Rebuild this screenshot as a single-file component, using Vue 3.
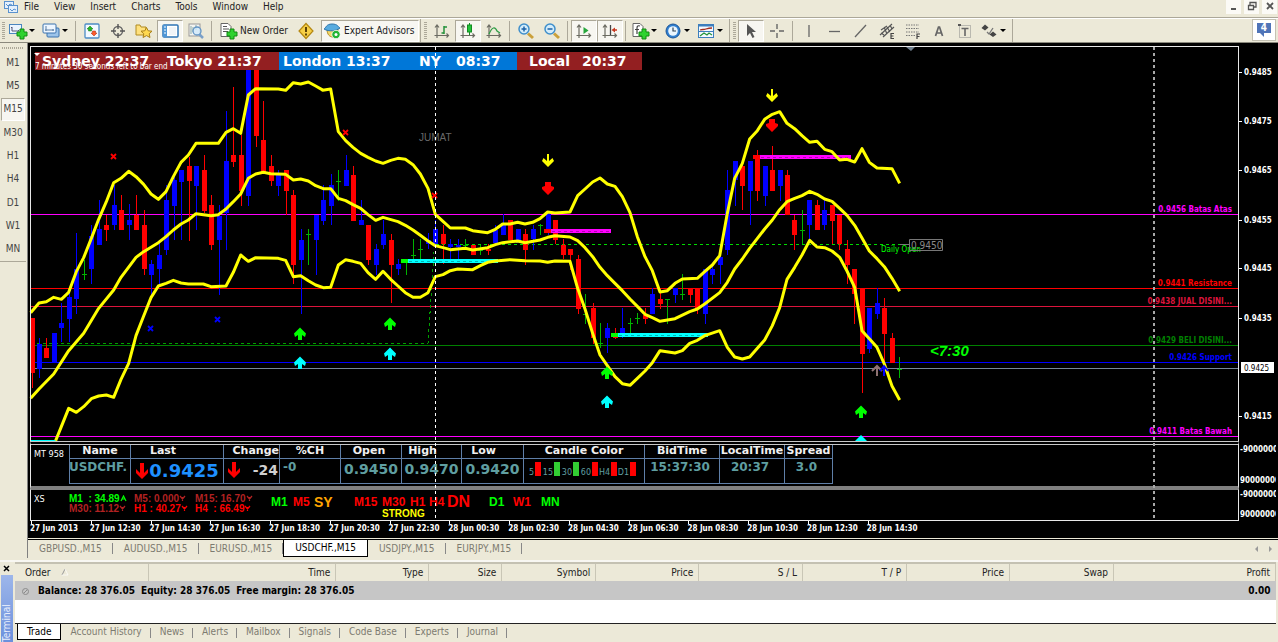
<script setup>
const menus = ['File', 'View', 'Insert', 'Charts', 'Tools', 'Window', 'Help']

const axes = '<path d="M5 3v13M2.5 13.500h14M3 5.500l2-2.500 2 2.500M14.500 11.500l2 2-2 2" fill="none" stroke="#6b6b62" stroke-width="1.200"/>'
const plus = '<path d="M12 7h4v3h3v4h-3v3h-4v-3h-3v-4h3z" fill="#2fd22f" stroke="#128a12"/>'
const lens = '<path d="M12 11.500l5 4.500" stroke="#caa03a" stroke-width="3"/><circle cx="8" cy="7" r="5" fill="#d3ecfa" stroke="#3f8fcb" stroke-width="1.500"/>'

const icons = {
  newChart: '<rect x="1.500" y="2.500" width="12" height="9" fill="#eaf4ff" stroke="#4a86c0"/><path d="M4 5v4h7M4 5l-1 1M11 9l-1-1" stroke="#557" fill="none"/>' + plus,
  profiles: '<rect x="6" y="6" width="12" height="9" rx="1" fill="#9cc4ea" stroke="#3a72ae"/><rect x="2" y="2" width="13" height="9" rx="1" fill="#edf6ff" stroke="#3a72ae"/><path d="M5 4v5M4 8h9M12 7v2" stroke="#5a7ea4"/>',
  market: '<rect x="3" y="2" width="14" height="14" rx="1" fill="#f3f9ff" stroke="#4d8cc5" stroke-width="1.300"/><path d="M8 4l3 3H9.500v2h-3V7H5z" fill="#25b825" stroke="#137313" stroke-width=".5"/><path d="M12 14l-3-3h1.500V9h3v2H15z" fill="#ff5a2b" stroke="#a33010" stroke-width=".5"/>',
  cross: '<circle cx="10" cy="9" r="4.500" fill="none" stroke="#666" stroke-width="1.400"/><path d="M10 2v5M10 11v5M3 9h5M12 9h5" stroke="#555" stroke-width="1.400"/>',
  star: '<path d="M2 3h4l1 2h5v8H2z" fill="#ffe17d" stroke="#b08b22"/><path d="M12.500 5.500l1.700 3.300 3.800.4-2.800 2.600.8 3.700-3.500-1.900-3.500 1.900.8-3.700L7 9.200l3.800-.4z" fill="#ffd94f" stroke="#a98018"/>',
  navigator: '<rect x="3" y="3" width="15" height="12" rx="1" fill="#fff" stroke="#2f74b5" stroke-width="1.500"/><path d="M3 3h4v12H3z" fill="#4f96d6"/><path d="M9 6h7M9 8h7M9 10h7M9 12h7" stroke="#e3e8ef"/><path d="M4 5h2M4 8h2M4 11h2" stroke="#fff"/>',
  tester: '<rect x="3" y="2" width="11" height="12" fill="#f4f4f0" stroke="#999"/><path d="M5 4v8M7 5v5M10 3v5" stroke="#8aa"/><path d="M13 12l4 4" stroke="#7aa0c8" stroke-width="2.500"/><circle cx="11" cy="9" r="4" fill="#cfe8fb" fill-opacity=".8" stroke="#6294c4" stroke-width="1.300"/>',
  order: '<path d="M3 1.500h7l3 3v10H3z" fill="#fff" stroke="#666"/><path d="M5 4.500h4M5 7h6M5 9.500h5" stroke="#555"/>' + plus,
  diamond: '<path d="M10 1.500l7 7.500-7 7.500L3 9z" fill="#f7cf46" stroke="#b48710" stroke-width="1.200"/><path d="M10 5v5M10 11.500v2" stroke="#4a3300" stroke-width="1.800"/>',
  expert: '<path d="M5 7c0 6 3 8 6 8 4 0 5-3 5-8z" fill="#f3d76a" stroke="#b38d25"/><path d="M2 7c2-1 2-5 8-5s6 3 8 4c-4 3-11 4-16 1z" fill="#58abdf" stroke="#2b74ab"/><circle cx="14" cy="12.500" r="4.200" fill="#22b534" stroke="#fff" stroke-width=".8"/><circle cx="14" cy="12.500" r="1.500" fill="#fff"/>',
  bars: axes + '<path d="M12 4v8M12 5h3M9.500 11H12" stroke="#23913a" stroke-width="1.500" fill="none"/>',
  candles: axes + '<path d="M11.500 1v12" stroke="#128a22"/><rect x="9.500" y="3" width="4" height="7" fill="#22c33a" stroke="#128a22"/>',
  line: axes + '<path d="M5 12c3-7 6-8 8-3l3 2" fill="none" stroke="#2f9d45" stroke-width="1.300"/>',
  zoomIn: lens + '<path d="M5.500 7h5M8 4.500v5" stroke="#1b62a8" stroke-width="1.500"/>',
  zoomOut: lens + '<path d="M5.500 7h5" stroke="#1b62a8" stroke-width="1.500"/>',
  scroll: axes + '<path d="M9.500 5l5 3.500-5 3.500z" fill="#26a63c"/>',
  shift: axes + '<path d="M10.500 3v10" stroke="#444" stroke-width="1.300"/><path d="M11.500 8l3.500-2.500v5z" fill="#c8371e"/><path d="M14 8h3" stroke="#c8371e" stroke-width="1.500"/>',
  indicators: '<path d="M3 1.500h7l3 3v10H3z" fill="#fff" stroke="#666"/><path d="M10 4c-3-1-3 1-3 3v5M5 7.500h4" fill="none" stroke="#444" stroke-width="1.200"/>' + plus,
  clock: '<circle cx="10" cy="9" r="7" fill="#2f7fd0" stroke="#1d5698"/><circle cx="10" cy="9" r="4.800" fill="#eaf6ff"/><path d="M10 5.500V9h3" stroke="#345" stroke-width="1.200" fill="none"/>',
  template: '<rect x="2.500" y="2.500" width="15" height="13" fill="#f4faff" stroke="#3d7fbd"/><path d="M2.500 3.500h15" stroke="#3d7fbd" stroke-width="2"/><path d="M4 8c3-1 3 0 6-1s3-1 6-1" stroke="#a52d1e" fill="none" stroke-width="1.300"/><path d="M3 9.500h14" stroke="#3d7fbd"/><path d="M4 14l4-3 3 2 2-2 3 2" stroke="#25953a" fill="none" stroke-width="1.300"/>',
  pointer: '<path d="M6 2v12l3-3 2.500 5 2-1-2.500-5h4z" fill="#555"/>',
  crosshair: '<path d="M10 2v5M10 11v5M3 9h5M12 9h5" stroke="#666" stroke-width="1.400"/>',
  vertical: '<path d="M10 3v12" stroke="#666" stroke-width="1.300"/>',
  horizontal: '<path d="M4 9.500h11" stroke="#666" stroke-width="1.300"/>',
  trend: '<path d="M4 15L15 3" stroke="#666" stroke-width="1.300"/>',
  channel: '<path d="M3 13L15 2M4 8l6-4M6 15L17 5M4 11l3 2M7 5l3 7M10 5l3 5M13 3l2 4" stroke="#555" stroke-width="1.200"/><path d="M17 11.500h-3v5h3M14 14h2.500" fill="none" stroke="#444" stroke-width="1.200"/>',
  fibo: '<path d="M3 3h13M3 6.500h13M3 10h13M3 13.500h9" stroke="#777" stroke-dasharray="1.500 1"/><path d="M17 12h-3v5M14 14.500h2.500" fill="none" stroke="#444" stroke-width="1.200"/>',
  letter: '<path d="M6.500 14l3-9h1l3 9M7.500 11h5" fill="none" stroke="#666" stroke-width="1.700"/>',
  label: '<rect x="4.500" y="3.500" width="11" height="12" fill="none" stroke="#888" stroke-dasharray="1 1"/><path d="M6.500 6.500h7M10 6v8" stroke="#666" stroke-width="1.600"/><path d="M3 2h3v2H3z" fill="#555"/>',
  arrows: '<path d="M6 2.500l3.500 3L6 8.500 2.500 6z" fill="#444"/><path d="M8 10l2 2 4-6" stroke="#777" fill="none" stroke-width="1.300"/><path d="M14 9.500l3.500 3-3.500 2.500-3.500-2.500z" fill="#444"/>',
}

const groups = [
  [
    { i: 'newChart', menu: true }, { i: 'profiles', menu: true }, { sep: true },
    { i: 'market' }, { i: 'cross' }, { i: 'star' }, { i: 'navigator', on: true }, { i: 'tester' }, { sep: true },
    { i: 'order', text: 'New Order' }, { i: 'diamond' }, { i: 'expert', text: 'Expert Advisors', on: true },
  ],
  [
    { i: 'bars' }, { i: 'candles', on: true }, { i: 'line' }, { sep: true }, { i: 'zoomIn' }, { i: 'zoomOut' }, { sep: true },
    { i: 'scroll', on: true }, { i: 'shift', on: true }, { sep: true },
    { i: 'indicators', menu: true }, { i: 'clock', menu: true }, { i: 'template', menu: true },
  ],
  [
    { i: 'pointer', on: true }, { i: 'crosshair' }, { sep: true }, { i: 'vertical' }, { i: 'horizontal' }, { i: 'trend' },
    { i: 'channel' }, { i: 'fibo' }, { i: 'letter' }, { i: 'label' }, { i: 'arrows', menu: true },
  ],
]

const frames = ['M1', 'M5', 'M15', 'M30', 'H1', 'H4', 'D1', 'W1', 'MN']

// Bars from left to right: colour, high, body top, body bottom, low (thirds of a pixel below the plot origin)
const bars = `r 744 744 910 955|b 803 821 896 923|r 803 834 865 865|b 790 790 878 878|b 700 758 774 815|b 670 682 746 816|b 490 597 688 733|g 570 613 613 630
b 465 497 598 642|b 390 478 525 525|r 434 465 480 512|b 345 405 466 480|r 374 419 480 480|b 403 450 466 511|r 374 434 480 480|r 419 464 598 615
b 570 582 615 680|b 510 555 598 650|b 345 390 540 555|b 310 330 407 511|b 300 300 335 511|r 262 287 334 513|b 287 287 348 480|r 256 300 423 430
r 374 404 525 540|b 405 437 511 675|b 124 273 430 540|r 51 255 276 290|r 195 255 363 407|b -3 -3 377 407|r -3 -3 199 230|r 93 210 305 305
r 255 288 334 348|b 300 315 348 377|r 300 300 363 434|r 360 374 585 643|b 478 509 570 733|g 478 493 493 585|b 434 434 511 615|b 345 390 453 466
b 313 345 407 466|g 300 333 333 392|b 255 300 348 348|r 287 315 453 453|b 390 450 466 466|r 464 464 570 585|b 522 537 585 615|b 450 492 525 537
r 492 509 585 700|b 568 582 598 615|g 570 573 573 615|g 508 555 555 570|g 508 538 538 570|b 490 510 522 537|b 450 478 522 530|r 464 492 522 582
b 508 522 530 570|b 508 525 530 568|g 508 525 525 530|r 525 525 555 555|g 525 540 540 556|r 522 537 543 556|b 465 480 520 525|b 432 465 495 495
r 450 450 511 511|b 478 478 520 520|r 478 492 540 585|b 465 478 508 540|g 462 465 465 495|b 430 430 480 495|r 450 450 511 522|r 508 525 555 568
r 537 537 555 600|r 555 568 716 733|g 672 733 733 762|r 700 713 805 822|g 760 818 818 835|b 760 773 805 850|r 773 800 805 808|b 713 773 800 805
g 743 760 760 790|g 730 745 745 762|r 713 735 747 762|b 655 672 733 733|r 655 686 701 716|g 686 688 688 762|b 655 655 676 700|g 613 673 673 690
r 657 657 675 700|r 657 657 716 733|b 597 597 733 762|b 585 597 615 643|b 555 560 585 643|b 300 360 540 555|b 273 273 330 407|r 273 287 348 420
b 273 273 363 466|r 240 262 363 392|b 287 287 377 407|r 228 300 363 363|b 300 300 348 392|r 300 315 436 436|r 434 450 495 540|g 419 480 480 522
b 390 390 466 510|r 390 404 480 480|b 390 419 466 480|r 404 404 453 522|r 434 434 522 540|r 509 537 585 643|r 597 597 673 762|r 657 657 852 968
b 713 713 836 850|b 655 700 732 748|r 685 713 792 880|r 790 804 880 880|g 862 896 896 923`
  .split(/[|\n]/)
  .map((row, n) => {
    const [c, ...v] = row.trim().split(' ')
    const [high, top, bottom, low] = v.map((y) => Math.round(70 + y / 3))
    return { c, high, top, bottom, low, x: Math.round(31.5 + 7.48 * n) }
  })

// Each run of points starts at its own horizontal origin
const join = (a, b, c) =>
  [[a, 0], [b, 960], [c, 1920]]
    .flatMap(([s, dx]) => s.split(' ').map((p) => { const [x, y] = p.split(','); return `${+x + dx},${+y + 210}` }))
    .join(' ')

const bands = [
  join(
    '92,728 117,699 139,695 161,682 184,688 206,667 229,605 251,563 274,505 296,448 319,395 341,338 363,325 386,304 408,320 431,343 453,372 475,388 498,365 520,320 543,277 565,255 588,220 655,220 678,187 700,176 722,190 745,75 767,56 835,57 857,61 880,38 902,42 925,36 947,48 970,61',
    '8,61 32,57 55,185 77,212 99,232 122,250 144,262 167,273 189,280 212,271 234,265 256,268 279,284 301,312 324,355 346,433 369,454 391,474 436,474 458,482 503,488 526,478 548,462 570,462 593,457 615,462 638,457 660,446 683,426 705,429 750,426 773,377 795,357 818,336 840,324 862,342 885,349 907,380 930,428 952,500',
    '15,560 37,602 60,666 82,662 105,640 127,627 172,625 194,605 217,585 239,557 262,430 284,325 307,280 329,207 352,182 374,148 397,133 419,125 441,160 464,176 486,197 509,217 531,214 554,238 576,245 599,270 621,268 644,276 666,236 688,277 711,294 756,296 779,340',
  ),
  join(
    '92,985 117,957 161,912 206,842 251,790 296,715 341,660 363,622 408,562 431,545 475,518 498,500 520,480 543,462 565,450 588,431 633,437 655,434 678,417 700,395 722,372 745,325 767,312 790,307 812,311 857,313 880,330 902,327 925,333 947,347 970,356',
    '32,356 55,385 77,392 99,404 122,415 144,434 167,451 189,442 234,455 256,466 279,480 301,496 324,513 346,527 369,533 391,539 436,535 458,540 503,533 526,524 548,518 593,513 615,518 660,510 683,502 705,497 750,501 773,512 795,533 818,560 840,592 862,617 885,640 907,662 930,687 952,709',
    '15,733 37,743 60,754 105,746 149,725 172,717 194,702 239,668 262,637 284,597 307,567 329,535 374,477 397,450 419,419 441,395 464,385 486,377 509,364 531,373 554,387 576,394 599,415 621,436 644,466 666,504 688,543 711,566 733,590 756,625 779,664',
  ),
  join(
    '167,1112 184,1070 206,1015 229,1027 251,1010 274,986 296,978 319,975 341,982 363,928 386,880 408,797 431,738 453,683 475,648 498,640 520,631 543,639 565,642 610,642 633,650 678,648 700,607 722,555 745,574 767,563 835,565 857,571 880,620 902,617 925,632 947,645 970,653',
    '32,652 55,585 77,569 99,574 122,580 144,608 167,628 189,604 212,628 234,648 256,668 279,682 301,682 324,668 346,620 369,614 391,602 413,597 458,599 481,587 503,577 526,573 570,569 615,572 660,573 683,577 705,573 750,574 773,655 795,717 818,790 840,855 862,887 885,920 907,941 930,946 952,925',
    '15,903 37,878 60,842 105,849 127,842 149,820 172,811 194,797 239,782 262,832 284,861 307,867 329,861 352,835 374,810 397,767 419,713 441,628 464,592 486,555 509,511 531,531 554,533 576,543 599,562 621,603 644,652 666,782 688,806 711,832 733,882 756,948 779,990',
  ),
]

const levels = [
  { y: 214, c: '#ff00ff', t: '0.9456 Batas Atas' },
  { y: 288, c: '#ff0000', t: '0.9441 Resistance' },
  { y: 306, c: '#dc143c', t: '0.9438 JUAL DISINI...' },
  { y: 345, c: '#008000', t: '0.9429 BELI DISINI...' },
  { y: 362, c: '#0000ff', t: '0.9426 Support' },
  { y: 368, c: '#778899', t: '' },
  { y: 436, c: '#ff00ff', t: '0.9411 Batas Bawah' },
]

const prices = [[72, '0.9485'], [121, '0.9475'], [170, '0.9465'], [220, '0.9455'], [268, '0.9445'], [318, '0.9435'], [416, '0.9415']]

const zones = [
  { x: 401, w: 97, y: 259, c: '#00ffff', s: '#00ff00' },
  { x: 611, w: 97, y: 333, c: '#00ffff', s: '#00ff00' },
  { x: 544, w: 67, y: 229, c: '#ff00ff', s: '#ff0000' },
  { x: 753, w: 98, y: 155, c: '#ff00ff', s: '#ff0000' },
]

const up = 'M0-6.500L6-.500L5 3L2 1V6H-2V1L-5 3L-6-.500z'
const down = 'M-1-6H1V1L4.500-2L6 1L0 7L-6 1L-4.500-2L-1 1z'
const fat = 'M-3-6H3V-2L6-1V1L0 7L-6 1V-1L-3-2z'
const marks = [
  ...[[300, 334], [390, 324], [607, 373], [861, 412]].map(([x, y]) => ({ x, y, d: up, c: '#00ff00' })),
  ...[[300, 363], [390, 354], [607, 402]].map(([x, y]) => ({ x, y, d: up, c: '#00ffff' })),
  ...[[548, 160], [772, 95]].map(([x, y]) => ({ x, y, d: down, c: '#ffff00' })),
  ...[[548, 188], [772, 125]].map(([x, y]) => ({ x, y, d: fat, c: '#ff0000' })),
]
const crosses = [[114, 156, '#f00'], [346, 132, '#f00'], [435, 195, '#f00'], [151, 328, '#00f'], [218, 319, '#00f']]

const quote = [
  { h: 'Name', w: 61, v: 'USDCHF.', k: 'm' },
  { h: 'Last', w: 93, v: '0.9425', k: 'last', arrow: true },
  { h: 'Change', w: 56, v: '-24', k: 'change', arrow: true },
  { h: '%CH', w: 61, v: '-0', k: 'left' },
  { h: 'Open', w: 61, v: '0.9450', k: 'big' },
  { h: 'High', w: 60, v: '0.9470', k: 'big high' },
  { h: 'Low', w: 62, v: '0.9420', k: 'big high' },
  { h: 'Candle Color', w: 121, k: 'candle' },
  { h: 'BidTime', w: 75, v: '15:37:30', k: 'm' },
  { h: 'LocalTime', w: 65, v: '20:37', k: 'm' },
  { h: 'Spread', w: 48, v: '3.0', k: 'm' },
]
const candleColors = [['5', 'red'], ['15', 'green'], ['30', 'green'], ['60', 'red'], ['H4', 'red'], ['D1', 'red']]

const strengths = [
  ['M1  : 34.89', 'lime', 1], ['M5: 0.000', 'brown', 0], ['M15: 16.70', 'brown', 0],
  ['M30: 11.12', 'brown', 0], ['H1 : 40.27', 'scarlet', 0], ['H4  : 66.49', 'scarlet', 0],
]
const signals = [
  ['M1', 'lime'], ['M5', 'scarlet'], ['SY', 'gold'], ['M15', 'scarlet'], ['M30', 'scarlet'], ['H1', 'scarlet'],
  ['H4', 'scarlet'], ['DN', 'dn'], ['D1', 'lime'], ['W1', 'scarlet'], ['MN', 'lime'],
]

const times = ['27 Jun 2013', '27 Jun 12:30', '27 Jun 14:30', '27 Jun 16:30', '27 Jun 18:30', '27 Jun 20:30', '27 Jun 22:30',
  '28 Jun 00:30', '28 Jun 02:30', '28 Jun 04:30', '28 Jun 06:30', '28 Jun 08:30', '28 Jun 10:30', '28 Jun 12:30', '28 Jun 14:30']

const charts = ['GBPUSD.,M15', 'AUDUSD.,M15', 'EURUSD.,M15', 'USDCHF.,M15', 'USDJPY.,M15', 'EURJPY.,M15']
const columns = [['Order', 134], ['Time', 187], ['Type', 93], ['Size', 73], ['Symbol', 94], ['Price', 103], ['S / L', 104],
  ['T / P', 104], ['Price', 103], ['Swap', 104], ['Profit', 162]]
const tabs = ['Trade', 'Account History', 'News', 'Alerts', 'Mailbox', 'Signals', 'Code Base', 'Experts', 'Journal']
</script>

<template>
  <div class="app">
    <nav class="menubar">
      <svg class="logo" width="14" height="14" viewBox="0 0 14 14">
        <rect x=".5" y="1.500" width="9" height="7" fill="#e4f0fc" stroke="#5a92ce" />
        <rect x="4.500" y="5.500" width="9" height="7" fill="#e4f0fc" stroke="#5a92ce" />
        <path d="M2 4l2 2 2-2 2 1M6 9l2 2 2-2 2 1" fill="none" stroke="#5a92ce" />
      </svg>
      <button v-for="m in menus" :key="m" type="button">{{ m }}</button>
      <span class="win">
        <button type="button" aria-label="Minimize"><svg width="10" height="10"><path d="M2 8h5" stroke="#555" stroke-width="2" /></svg></button>
        <button type="button" aria-label="Restore"><svg width="10" height="10"><path d="M3 4V1.500h6v4.500H7M3 1.500h6M1.500 4.500h5v4h-5z" fill="none" stroke="#555" stroke-width="1.300" /></svg></button>
        <button type="button" aria-label="Close"><svg width="10" height="10"><path d="M2 2l6 6M8 2l-6 6" stroke="#555" stroke-width="1.800" /></svg></button>
      </span>
    </nav>

    <div class="toolbar">
      <div v-for="(g, n) in groups" :key="n" class="group">
        <span class="grip"></span>
        <template v-for="(b, k) in g" :key="k">
          <span v-if="b.sep" class="sep"></span>
          <button v-else type="button" :class="{ on: b.on, drop: b.menu, text: b.text }" :aria-label="b.text || b.i">
            <svg width="20" height="18" viewBox="0 0 20 18" v-html="icons[b.i]"></svg>
            <span v-if="b.text">{{ b.text }}</span>
            <i v-if="b.menu" class="caret"></i>
          </button>
        </template>
      </div>
      <button type="button" class="news" aria-label="News">
        <svg width="18" height="16" viewBox="0 0 18 16"><path d="M2 1h14v10H9v4l-4-4H2z" fill="#4f74b8" /></svg>
        <span>4</span>
      </button>
    </div>

    <div class="work">
      <aside class="side">
        <div class="frames">
          <button v-for="f in frames" :key="f" type="button" :class="{ on: f === 'M15' }">{{ f }}</button>
        </div>
      </aside>

      <main class="window">
        <div class="chart">
          <svg class="plot" viewBox="28 43 1250 398">
            <rect x="28" y="43" width="1250" height="398" fill="#000" />
            <g shape-rendering="crispEdges">
              <rect v-for="l in levels" :key="l.y" x="31" :y="l.y" width="1207" height="1" :fill="l.c" />
              <path d="M31 343H428L434 252" class="open" />
              <path d="M436 244.500H905" class="open bright" />
              <g v-for="(b, n) in bars" :key="n" :class="b.c">
                <rect :x="b.x" :y="b.high" width="1" :height="b.low - b.high" />
                <rect :x="b.x - 2" :y="b.top" width="5" :height="Math.max(1, b.bottom - b.top)" />
              </g>
              <g v-for="z in zones" :key="z.x">
                <rect :x="z.x" :y="z.y" :width="z.w" height="4" :fill="z.c" />
                <rect :x="z.x" :y="z.y" width="7" height="4" :fill="z.s" />
                <path :d="`M${z.x + 8} ${z.y + 2}H${z.x + z.w}`" stroke="#000" stroke-opacity=".3" stroke-dasharray="3 3" />
              </g>
              <rect x="31" y="440" width="25" height="1" fill="#0ff" />
            </g>
            <g transform="scale(0.333333)">
              <polyline v-for="(p, n) in bands" :key="n" :points="p" class="band" />
            </g>
            <path v-for="(m, n) in marks" :key="n" :d="m.d" :fill="m.c" :transform="`translate(${m.x} ${m.y})`" />
            <path v-for="(c, n) in crosses" :key="n" :d="`M${c[0] - 3} ${c[1] - 2}l5 5m0-5l-5 5`" :stroke="c[2]" stroke-width="1.800" />
            <path d="M861 435l6 6h-12z" fill="#0ff" />
            <path d="M877 376v-10M872 371l5-5 5 5" fill="none" stroke="#8f7272" stroke-width="2" />
            <path d="M884 376v-10M880 371l4-5 4 5" fill="none" stroke="#00f" stroke-width="2" />

            <rect x="35" y="52" width="244" height="18" fill="#931f21" />
            <rect x="279" y="52" width="238" height="18" fill="#0077d8" />
            <rect x="517" y="52" width="125" height="18" fill="#931f21" />
            <g class="clock">
              <text x="42" y="66">Sydney 22:37</text>
              <text x="167" y="66">Tokyo 21:37</text>
              <text x="283" y="66">London 13:37</text>
              <text x="419" y="66">NY</text>
              <text x="456" y="66">08:37</text>
              <text x="529" y="66">Local</text>
              <text x="582" y="66">20:37</text>
            </g>
            <path d="M34 53h6l-3 3z" fill="#fff" />
            <text x="35" y="69" class="s left">7 minutes 30 seconds left to bar end</text>
            <text x="419" y="141" class="day">JUMAT</text>
            <text x="930" y="356" class="timer">&lt;7:30</text>
            <text x="881" y="252" class="s lime">Daily Open</text>
            <path d="M900 244.500h9M909.500 239.500h33v11h-33z" fill="none" stroke="#777" />
            <text x="911" y="249" class="tag">0.9450</text>
            <g class="s end">
              <text v-for="l in levels" :key="l.y" x="1232" :y="l.y - 2" :fill="l.c">{{ l.t }}</text>
            </g>

            <path d="M30.500 441V46.500H1238.500V441" fill="none" stroke="#e8e8e8" shape-rendering="crispEdges" />
            <path d="M906 47h9l-4 4z" fill="#708090" />
            <g class="axis">
              <g v-for="p in prices" :key="p[0]">
                <path :d="`M1239 ${p[0] + .5}h3`" stroke="#fff" />
                <text x="1244" :y="p[0] + 3">{{ p[1] }}</text>
              </g>
              <rect x="1241" y="362" width="33" height="11" fill="#fff" />
              <text x="1244" y="371" class="now">0.9425</text>
            </g>
          </svg>

          <section class="pane quote">
            <span class="code">MT 958</span>
            <table>
              <colgroup><col v-for="q in quote" :key="q.h" :style="{ width: q.w + 'px' }" /></colgroup>
              <thead><tr><th v-for="q in quote" :key="q.h" :class="q.k">{{ q.h }}</th></tr></thead>
              <tbody>
                <tr>
                  <td v-for="q in quote" :key="q.h" :class="q.k">
                    <div>
                      <svg v-if="q.arrow" width="14" height="18" viewBox="0 0 14 18"><path d="M5 1h4v10l4-4v4l-6 6-6-6V7l4 4z" fill="#f00" /></svg>
                      <template v-if="q.v">{{ q.v }}</template>
                      <template v-else>
                        <span v-for="c in candleColors" :key="c[0]" class="cc">{{ c[0] }}<i :class="c[1]"></i></span>
                      </template>
                    </div>
                  </td>
                </tr>
              </tbody>
            </table>
            <div class="scale"><span>-9000000</span><span>90000000</span></div>
          </section>

          <section class="pane xs">
            <span class="code">XS</span>
            <div class="strengths">
              <span v-for="s in strengths" :key="s[0]" :class="s[1]">{{ s[0] }}<svg width="7" height="7" viewBox="0 0 7 7"><path :d="s[2] ? 'M1 6l2.500-5 2.500 5M2 4h3' : 'M1 1l2.500 3L6 1M3.500 2v4'" fill="none" stroke="currentColor" stroke-width="1.200" /></svg></span>
            </div>
            <div class="signals">
              <span v-for="s in signals" :key="s[0]" :class="s[1]">{{ s[0] }}</span>
              <span class="strong">STRONG</span>
            </div>
            <div class="scale"><span>-9000000</span><span>90000000</span></div>
          </section>

          <div class="times"><span v-for="t in times" :key="t">{{ t }}</span></div>
          <i class="vline day"></i>
          <i class="vline next"></i>
        </div>

        <div class="charttabs">
          <button v-for="c in charts" :key="c" type="button" :class="{ on: c === 'USDCHF.,M15' }">{{ c }}</button>
          <svg class="scroll" width="22" height="10"><path d="M6 2v6L3 5zM17 2v6l3-3z" fill="#999" /></svg>
        </div>
      </main>
    </div>

    <section class="terminal">
      <div class="handle">
        <button type="button" aria-label="Close"><svg width="8" height="8"><path d="M1 1l5 5M6 1L1 6" stroke="#000" stroke-width="1.500" /></svg></button>
        <span>Terminal</span>
      </div>
      <div class="body">
        <table>
          <colgroup><col v-for="(c, n) in columns" :key="n" :style="{ width: c[1] / 12.71 + '%' }" /></colgroup>
          <thead>
            <tr>
              <th v-for="(c, n) in columns" :key="n">{{ c[0] }}<svg v-if="n === 0" width="10" height="8"><path d="M1 7l3-6" stroke="#999" /><path d="M4 1l3 6H1" fill="none" stroke="#fff" stroke-opacity=".7" /></svg></th>
            </tr>
          </thead>
          <tbody>
            <tr>
              <td colspan="10">
                <svg width="9" height="9"><circle cx="4.500" cy="4.500" r="3" fill="none" stroke="#8a8a8a" /><path d="M3 6l3-3" stroke="#8a8a8a" /></svg>
                <span>Balance: 28 376.05</span><span>Equity: 28 376.05</span><span>Free margin: 28 376.05</span>
              </td>
              <td>0.00</td>
            </tr>
          </tbody>
        </table>
        <div class="blank"></div>
        <div class="tabs">
          <button v-for="t in tabs" :key="t" type="button" :class="{ on: t === 'Trade' }">{{ t }}</button>
        </div>
      </div>
    </section>
  </div>
</template>

<style>
body { background: #ece9d8; }
</style>

<style scoped>
.app { font-family: "DejaVu Sans Condensed", "DejaVu Sans", sans-serif; font-size: 10px; line-height: 12px; color: #222; background: #ece9d8; overflow: hidden; }
.app * { box-sizing: border-box; }
button { font: inherit; color: inherit; background: none; border: 0; padding: 0; margin: 0; white-space: nowrap; }

.menubar { display: flex; align-items: center; height: 18px; padding: 0 0 3px 4px; gap: 15px; border-bottom: 1px solid #aca899; }
.menubar .logo { margin-right: -9px; }
.win { display: flex; gap: 3px; margin-left: auto; padding-right: 1px; }
.win button { width: 15px; height: 14px; background: #fbfaf6; }

.toolbar { display: flex; height: 25px; border-top: 1px solid #fff; border-bottom: 1px solid #8a887c; }
.group { display: flex; align-items: center; padding-right: 1px; border-right: 1px solid #aca899; }
.group + .group { margin-left: 1px; }
.grip { width: 3px; height: 18px; margin: 0 2px; background: repeating-linear-gradient(#aca899 0 1px, #ece9d8 1px 2px); }
.sep { width: 1px; height: 20px; margin: 0 3px 0 2px; background: #aca899; }
.group button { display: flex; align-items: center; justify-content: center; width: 26px; height: 22px; border: 1px solid transparent; }
.group button.drop { width: 33px; justify-content: flex-start; }
.group button.text { width: auto; padding: 0 4px 0 0; gap: 2px; margin-left: 2px; }
.group button.on { background: #f7f6f1; border-color: #aca899 #fff #fff #aca899; }
.caret { border: 3px solid transparent; border-top: 3px solid #000; border-bottom: 0; margin-left: 1px; }
.news { display: grid; place-items: center; width: 24px; height: 22px; margin: 0 2px 0 auto; background: #fff; border: 1px solid #c4c1b2; }
.news svg, .news span { grid-area: 1 / 1; }
.news span { color: #fff; padding-bottom: 4px; font-weight: bold; }

.work { display: flex; height: 515px; }
.side { width: 26px; flex: none; padding-top: 4px; }
.frames { display: flex; flex-direction: column; height: 215px; padding-top: 4px; border-bottom: 1px solid #aca899; background: repeating-linear-gradient(90deg, #aca899 0 1px, transparent 1px 2px) 2px 0 / 22px 2px no-repeat; }
.frames button { flex: 1; margin: 0 1px; color: #444; border: 1px solid transparent; }
.frames button.on { background: #f7f6f1; border-color: #aca899 #fff #fff #aca899; }

.window { flex: 1; min-width: 0; display: flex; flex-direction: column; border-left: 1px solid #808080; margin-left: 1px; }
.chart { position: relative; background: #000; color: #fff; }
.plot { display: block; width: 100%; height: auto; }
.plot text { font-size: 9px; }
.plot .clock text { font: bold 14px "DejaVu Sans", sans-serif; fill: #fff; }
.plot .left { fill: #fff; font-size: 8px; }
.plot .day { font: 10px "Liberation Sans", sans-serif; fill: #696969; }
.plot .timer { font: italic bold 15px "Liberation Sans", sans-serif; fill: #0f0; }
.plot .lime { fill: #0f0; font-size: 8px; }
.plot .tag { font-size: 10px; fill: #888; }
.plot .end text { text-anchor: end; font-size: 8px; font-weight: bold; }
.plot .axis text { fill: #fff; font-size: 8px; font-weight: bold; }
.plot .axis .now { fill: #000; font-weight: normal; }
.band { fill: none; stroke: #ff0; stroke-width: 9; stroke-linejoin: round; }
.open { fill: none; stroke: #00a000; stroke-dasharray: 3 3; }
.open.bright { stroke: #00dc00; }
.r { fill: #f00; }
.b { fill: #00f; }
.g { fill: #00b400; }

.pane { display: flex; position: relative; margin-left: 2px; margin-right: 39px; border: 1px solid #e8e8e8; }
.quote { height: 48px; border-top: 4px double #c8c8c8; border-bottom: 3px solid #808080; }
.xs { height: 32px; border-top-color: #808080; }
.code { width: 38px; flex: none; padding: 3px 0 0 3px; font-size: 9px; }
.scale { position: absolute; left: calc(100% + 2px); top: 0; bottom: 0; display: flex; flex-direction: column; justify-content: space-between; width: 36px; overflow: hidden; font-size: 8px; font-weight: bold; line-height: 10px; }
.quote table { table-layout: fixed; width: 763px; height: 37px; border-collapse: collapse; font-family: "DejaVu Sans", sans-serif; }
.quote th, .quote td { border: 1px solid #5f7fa8; padding: 0; overflow: hidden; white-space: nowrap; }
.quote th { height: 13px; font-size: 11px; line-height: 12px; border-top: 0; color: #f0f0f0; }
.quote td { font-size: 12px; line-height: 14px; color: #5f9ea0; font-weight: bold; vertical-align: top; }
.quote td div { display: flex; align-items: center; justify-content: center; height: 20px; }
.quote th.last { padding-right: 28px; }
.quote th.big { padding-right: 4px; }
.quote th.high { padding-right: 18px; }
.quote th.change { text-align: right; }
.quote td.m div { padding: 0 4px 4px 0; }
.quote td.left div { justify-content: flex-start; padding: 0 0 4px 3px; }
.quote td.big div { font-size: 14px; }
.quote td.last div { height: 24px; font-size: 18px; color: #1e90ff; }
.quote td.change div { height: 22px; font-size: 14px; color: #d0d0d0; justify-content: space-between; padding: 0 1px 0 3px; }
.quote td.candle div { height: 21px; font-size: 8px; font-weight: normal; gap: 2px; padding-right: 8px; }
.cc { display: flex; align-items: flex-end; justify-content: flex-end; gap: 1px; width: 17px; height: 15px; line-height: 9px; }
.cc i { width: 6px; height: 14px; flex: none; align-self: flex-start; }
.cc i.red { background: #f00; }
.cc i.green { background: #32cd32; }

.strengths { display: grid; grid-template-columns: 65px 61px 76px; align-content: start; padding-top: 4px; font: bold 10px/10px "Liberation Sans", sans-serif; white-space: pre; }
.signals { display: grid; grid-template-columns: 22px 21px 40px 28px 28px 19px 18px 42px 24px 28px 30px; grid-template-rows: 17px 8px; align-items: center; padding-top: 3px; font: bold 12px/12px "Liberation Sans", sans-serif; }
.lime { color: #0f0; }
.brown { color: #b22222; }
.scarlet { color: #f00; }
.gold { color: #ffa500; font-size: 14px; }
.dn { color: #f00; font-size: 16px; }
.strong { grid-area: 2 / 5 / 3 / 9; color: #ff0; font-size: 10px; }

.times { display: flex; height: 17px; padding-left: 2px; font-size: 8px; font-weight: bold; line-height: 16px; }
.times span { flex: 0 0 4.79%; white-space: nowrap; background: linear-gradient(#fff, #fff) 1px 0 / 1px 3px no-repeat; }
.vline { position: absolute; top: 4px; bottom: 17px; width: 1px; background: repeating-linear-gradient(#fff 0 3px, transparent 3px 6px); }
.vline.day { left: 32.56%; }
.vline.next { left: 90%; width: 2px; background: repeating-linear-gradient(#a8a8a8 0 3px, transparent 3px 6px); }

.charttabs { display: flex; flex: 1; margin-top: 1px; border-top: 1px solid #000; color: #7d7b70; }
.charttabs button { height: 17px; padding: 0 11px; position: relative; }
.charttabs button:not(.on)::after { content: ""; position: absolute; right: 0; top: 3px; height: 11px; border-right: 1px solid #888; }
.charttabs button.on { background: #fff; color: #000; border: 1px solid #000; border-top: 0; }
.charttabs .scroll { margin: 4px 4px 0 auto; }

.terminal { display: flex; margin-top: 2px; border-top: 2px solid #f8f7f2; }
.handle { display: flex; flex-direction: column; width: 15px; height: 81px; }
.handle button { height: 13px; display: grid; place-items: center; width: 13px; }
.handle span { flex: 1; width: 12px; margin-left: 1px; writing-mode: vertical-rl; transform: rotate(180deg); padding-top: 1px; background: linear-gradient(#6a8fdc, #9db6ea); color: #e8eefc; line-height: 12px; }
.body { flex: 1; border-top: 2px solid #c4c1b2; margin-right: 2px; display: flex; flex-direction: column; }
.body table { table-layout: fixed; width: 100%; border-collapse: collapse; }
.body th { height: 17px; padding: 0 5px; text-align: right; font-weight: normal; border-right: 1px solid #c9c6b6; }
.body th:first-child { text-align: left; padding-left: 10px; }
.body th svg { margin-left: 10px; }
.body tbody { background: #c6c6c6; font-weight: bold; color: #000; }
.body td { height: 19px; padding: 0 5px; }
.body td:last-child { text-align: right; }
.body td:first-child { padding-left: 4px; }
.body td svg { margin: 0 8px -2px 2px; }
.body td span { margin-right: 6px; }
.blank { height: 23px; background: #fff; }
.tabs { display: flex; height: 20px; padding-left: 2px; border-top: 1px solid #222; color: #7d7b70; }
.tabs button { height: 16px; padding: 0 9px; position: relative; }
.tabs button:not(.on)::after { content: ""; position: absolute; right: 0; top: 4px; height: 10px; border-right: 1px solid #888; }
.tabs button.on { background: #fff; color: #000; border: 1px solid #000; border-top: 0; }
</style>
